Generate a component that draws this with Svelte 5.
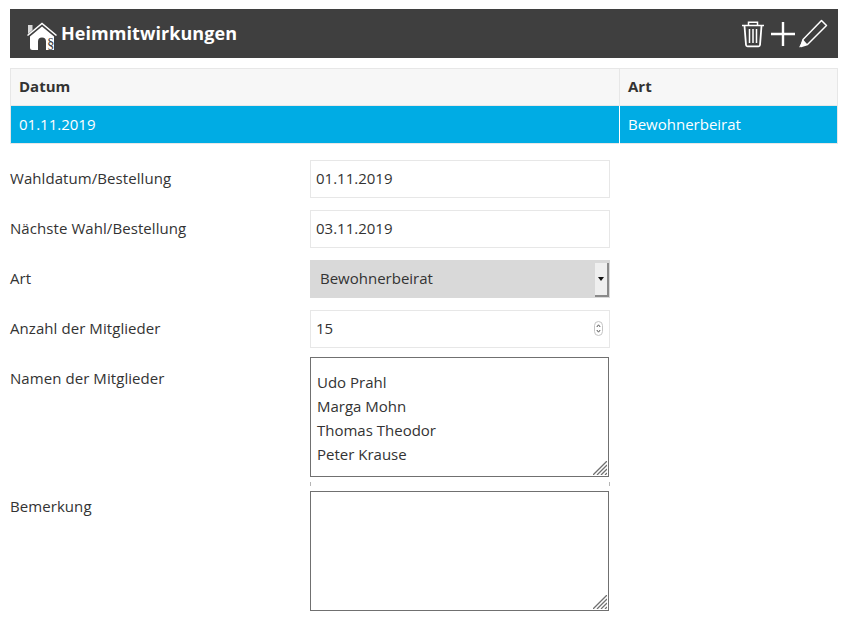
<script>
	const rows = [{ datum: '01.11.2019', art: 'Bewohnerbeirat' }];
	const members = 'Udo Prahl\nMarga Mohn\nThomas Theodor\nPeter Krause';
</script>

{#snippet grip()}
	<svg class="grip" width="14" height="14" viewBox="0 0 14 14" fill="none" stroke="#707070" stroke-width="1.300" aria-hidden="true">
		<path d="M0 14 14 0M4 14 14 4M8 14 14 8M12 14 14 12" />
	</svg>
{/snippet}

<div class="page">
	<header class="bar">
		<div class="title">
			<svg class="house" width="31" height="30" viewBox="0 0 31 30" aria-hidden="true">
				<path d="M1 4h4.500v5L1 13z" fill="#d8d8d8" />
				<path d="M0.500 14.500 15 2.500l14.500 12" fill="none" stroke="#fff" stroke-width="1.600" />
				<path d="M3 15.500 15 5.500l12 10V29H19V20.500a4 4 0 0 0-8 0V29H5.500A2.500 2.500 0 0 1 3 26.500z" fill="#fff" />
				<text x="20" y="27" font-size="15" fill="#3f3f3f" font-family="Liberation Serif, serif">§</text>
			</svg>
			<h1>Heimmitwirkungen</h1>
		</div>
		<div class="actions">
			<svg width="24" height="28" viewBox="0 0 24 28" fill="none" stroke="#fff" stroke-width="1.500" aria-hidden="true">
				<path d="M1 5.500h22M7.500 5V2.200h9V5" />
				<path d="M3.500 6 5 25a1.500 1.500 0 0 0 1.500 1.300h11A1.500 1.500 0 0 0 19 25L20.500 6" stroke-width="1.800" />
				<path d="M8.500 9v14M12 9v14M15.500 9v14" />
			</svg>
			<svg width="24" height="24" viewBox="0 0 24 24" fill="none" stroke="#fff" stroke-width="2.400" aria-hidden="true">
				<path d="M12 0v24M0 12h24" />
			</svg>
			<svg class="pencil" width="30" height="30" viewBox="0 0 30 30" aria-hidden="true">
				<path d="M23.500 1.500 28.500 6.500 9.500 25.500 3 27.500 5 20.500z" fill="none" stroke="#fff" stroke-width="1.500" stroke-linejoin="round" />
				<path d="M5 20.500 9.500 25.500 3 27.500 1 28.500z" fill="#fff" />
			</svg>
		</div>
	</header>

	<table class="list">
		<thead>
			<tr>
				<th class="col-date">Datum</th>
				<th>Art</th>
			</tr>
		</thead>
		<tbody>
			{#each rows as row}
				<tr class="selected">
					<td>{row.datum}</td>
					<td>{row.art}</td>
				</tr>
			{/each}
		</tbody>
	</table>

	<form class="form">
		<label for="wahl">Wahldatum/Bestellung</label>
		<input id="wahl" class="field" type="text" value="01.11.2019" />

		<label for="next">Nächste Wahl/Bestellung</label>
		<input id="next" class="field" type="text" value="03.11.2019" />

		<label for="art">Art</label>
		<div class="select-wrap">
			<select id="art" class="select">
				<option>Bewohnerbeirat</option>
			</select>
			<span class="select-btn"><i></i></span>
		</div>

		<label for="anzahl">Anzahl der Mitglieder</label>
		<div class="number-wrap">
			<input id="anzahl" class="field" type="text" value="15" />
			<svg class="spin" width="9" height="15" viewBox="0 0 9 15" aria-hidden="true">
				<rect x="0.500" y="0.500" width="8" height="14" rx="4" fill="#fff" stroke="#c4c4c4" />
				<path d="M2.800 6 4.500 3.800 6.200 6M2.800 9 4.500 11.200 6.200 9" fill="none" stroke="#555" />
			</svg>
		</div>

		<label class="top names-label" for="namen">Namen der Mitglieder</label>
		<div class="area-group">
			<div class="area-wrap names">
				<textarea id="namen" class="area" value={members}></textarea>
				{@render grip()}
			</div>
			<div class="ticks"></div>
		</div>

		<label class="top" for="bem">Bemerkung</label>
		<div class="area-wrap">
			<textarea id="bem" class="area"></textarea>
			{@render grip()}
		</div>
	</form>
</div>

<style>
	:global(body) {
		background: #fff;
		color: #333;
		font-family: "Open Sans", sans-serif;
		font-size: 15px;
	}

	.page {
		padding: 9px 6px 0 10px;
	}

	.bar {
		display: flex;
		justify-content: space-between;
		align-items: center;
		height: 49px;
		background: #3f3f3f;
		padding: 0 10px 0 17px;
	}

	.title {
		display: flex;
		align-items: center;
		gap: 3px;
	}

	.house {
		margin-top: 5px;
	}

	h1 {
		margin: -2px 0 0;
		color: #fff;
		font-size: 18px;
		font-weight: 700;
		letter-spacing: 0.06px;
	}

	.actions {
		display: flex;
		align-items: center;
		gap: 6px;
	}

	.pencil {
		margin-left: -3px;
	}

	.list {
		width: 828px;
		margin-top: 10px;
		border-collapse: collapse;
		table-layout: fixed;
		border: 1px solid #e7e7e7;
	}

	th,
	td {
		box-sizing: border-box;
		text-align: left;
		font-size: 15px;
	}

	th {
		height: 37px;
		padding: 0 8px 2px;
		background: #f7f7f7;
		color: #333;
		font-weight: 700;
		border-right: 1px solid #e7e7e7;
		border-bottom: 1px solid #e7e7e7;
	}

	td {
		height: 38px;
		padding: 0 8px 1px;
	}

	.col-date {
		width: 609px;
	}

	.selected td {
		background: #00ace4;
		color: #fff;
		font-weight: 500;
		border-right: 1px solid #fff;
	}

	.selected td:last-child {
		border-right: 0;
	}

	.form {
		display: grid;
		grid-template-columns: 300px 300px;
		row-gap: 12px;
		margin-top: 16px;
		align-items: center;
	}

	label {
		color: #333;
		margin-top: -2px;
		letter-spacing: 0.07px;
	}

	label.top {
		align-self: start;
		margin-top: 5px;
	}

	label.names-label {
		margin-top: 8px;
	}

	.field {
		display: block;
		box-sizing: border-box;
		width: 300px;
		height: 38px;
		padding: 0 5px 2px;
		border: 1px solid #e7e7e7;
		outline: 0;
		background: #fff;
		color: #333;
		font: 15px "Open Sans", sans-serif;
	}

	.select-wrap,
	.number-wrap {
		position: relative;
		width: 300px;
	}

	.select {
		display: block;
		box-sizing: border-box;
		width: 300px;
		height: 38px;
		padding: 0 10px 2px;
		border: 0;
		border-radius: 0;
		appearance: none;
		background: #d9d9d9;
		color: #333;
		font: 15px "Open Sans", sans-serif;
	}

	.select-btn {
		position: absolute;
		top: 3px;
		right: 1px;
		box-sizing: border-box;
		width: 14px;
		height: 34px;
		display: flex;
		align-items: center;
		justify-content: center;
		background: #efefef;
		border-right: 2px solid #8a8a8a;
		border-bottom: 2px solid #8a8a8a;
		pointer-events: none;
	}

	.select-btn i {
		width: 0;
		height: 0;
		border: 3px solid transparent;
		border-top: 4px solid #111;
		border-bottom: 0;
	}

	.spin {
		position: absolute;
		top: 11px;
		right: 7px;
	}

	.area-group {
		width: 300px;
	}

	.area-wrap {
		position: relative;
		width: 299px;
		height: 120px;
	}

	.area {
		display: block;
		box-sizing: border-box;
		width: 299px;
		height: 120px;
		padding: 12px 6px 0;
		border: 1px solid #707070;
		border-radius: 0;
		outline: 0;
		resize: none;
		background: #fff;
		color: #333;
		font: 15px/24px "Open Sans", sans-serif;
	}

	.grip {
		position: absolute;
		right: 2px;
		bottom: 2px;
		pointer-events: none;
	}

	.names {
		margin-top: -3px;
	}

	.ticks {
		box-sizing: border-box;
		height: 4px;
		margin-top: 5px;
		margin-bottom: -7px;
		border-left: 1px solid #b5b5b5;
		border-right: 1px solid #b5b5b5;
	}
</style>
